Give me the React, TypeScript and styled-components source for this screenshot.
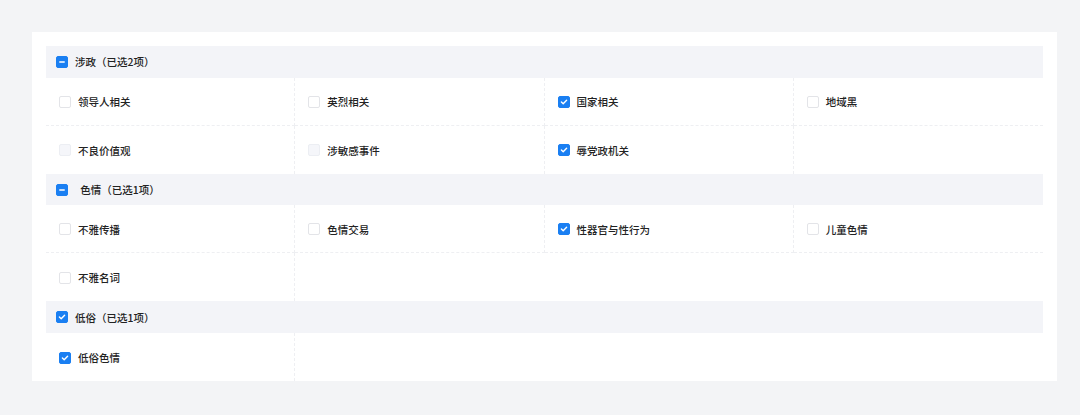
import React from "react";
import styled, { createGlobalStyle } from "styled-components";

const GlobalStyle = createGlobalStyle`
  html, body {
    margin: 0;
    padding: 0;
    background: #f3f4f6;
    font-family: "Noto Sans CJK SC", "Noto Sans", sans-serif;
  }
`;

type CheckState = "on" | "off" | "half" | "disabled";

interface Item {
  label: string;
  state: CheckState;
}

interface Group {
  title: string;
  state: CheckState;
  items: Item[];
}

const groups: Group[] = [
  {
    title: "涉政（已选2项）",
    state: "half",
    items: [
      { label: "领导人相关", state: "off" },
      { label: "英烈相关", state: "off" },
      { label: "国家相关", state: "on" },
      { label: "地域黑", state: "off" },
      { label: "不良价值观", state: "disabled" },
      { label: "涉敏感事件", state: "disabled" },
      { label: "辱党政机关", state: "on" },
    ],
  },
  {
    title: "\u2002色情（已选1项）",
    state: "half",
    items: [
      { label: "不雅传播", state: "off" },
      { label: "色情交易", state: "off" },
      { label: "性器官与性行为", state: "on" },
      { label: "儿童色情", state: "off" },
      { label: "不雅名词", state: "off" },
    ],
  },
  {
    title: "低俗（已选1项）",
    state: "on",
    items: [{ label: "低俗色情", state: "on" }],
  },
];

const COLS = 4;

/* ── Page / card ───────────────────────────────── */
const Page = styled.div`
  padding: 32px 23px 34px 32px;
`;

const Card = styled.div`
  background: #fff;
  padding: 14px 14px 0;
`;

/* ── Group header ──────────────────────────────── */
const GroupHead = styled.div`
  height: 31.7px;
  background: #f3f4f8;
  display: flex;
  align-items: center;
  gap: 7px;
  padding-left: 10px;
  font-size: 10.5px;
  font-weight: 500;
  color: #222;
  white-space: pre;
`;

/* ── Item grid ─────────────────────────────────── */
const Grid = styled.div`
  display: grid;
  grid-template-columns: repeat(${COLS}, 1fr);
`;

const Cell = styled.label<{ $lastCol: boolean; $lastRow: boolean }>`
  height: 48px;
  box-sizing: border-box;
  display: flex;
  align-items: center;
  gap: 7px;
  padding-left: 13px;
  padding-top: 1px;
  font-size: 10.5px;
  font-weight: 500;
  color: #222;
  border-right: ${({ $lastCol }) => ($lastCol ? "none" : "1px dashed #eeeff2")};
  border-bottom: ${({ $lastRow }) => ($lastRow ? "none" : "1px dashed #eeeff2")};
`;

/* ── Checkbox ──────────────────────────────────── */
const Box = styled.span<{ $state: CheckState }>`
  width: 12px;
  height: 12px;
  box-sizing: border-box;
  border-radius: 2px;
  flex-shrink: 0;
  display: inline-flex;
  align-items: center;
  justify-content: center;
  background: ${({ $state }) =>
    $state === "on" || $state === "half"
      ? "#1a7ff2"
      : $state === "disabled"
      ? "#f5f6fa"
      : "#fff"};
  border: 1px solid
    ${({ $state }) =>
      $state === "on" || $state === "half"
        ? "#1a7ff2"
        : $state === "disabled"
        ? "#eceef3"
        : "#e3e4e8"};
`;

function Check({ state }: { state: CheckState }) {
  return (
    <Box $state={state}>
      {state === "on" && (
        <svg width="8" height="8" viewBox="0 0 8 8">
          <path d="M1.4 4.1 L3.2 5.8 L6.6 2.3" fill="none" stroke="#fff" strokeWidth="1.4" strokeLinecap="round" strokeLinejoin="round" />
        </svg>
      )}
      {state === "half" && (
        <svg width="8" height="8" viewBox="0 0 8 8">
          <path d="M1.8 4 H6.2" fill="none" stroke="#fff" strokeWidth="1.5" strokeLinecap="round" />
        </svg>
      )}
    </Box>
  );
}

export default function App() {
  return (
    <>
      <GlobalStyle />
      <Page>
        <Card>
          {groups.map((g) => {
            const rows = Math.ceil(g.items.length / COLS);
            return (
              <React.Fragment key={g.title}>
                <GroupHead>
                  <Check state={g.state} />
                  <span>{g.title}</span>
                </GroupHead>
                <Grid>
                  {g.items.map((it, i) => (
                    <Cell
                      key={it.label}
                      $lastCol={i % COLS === COLS - 1}
                      $lastRow={Math.floor(i / COLS) === rows - 1}
                    >
                      <Check state={it.state} />
                      <span>{it.label}</span>
                    </Cell>
                  ))}
                </Grid>
              </React.Fragment>
            );
          })}
        </Card>
      </Page>
    </>
  );
}
